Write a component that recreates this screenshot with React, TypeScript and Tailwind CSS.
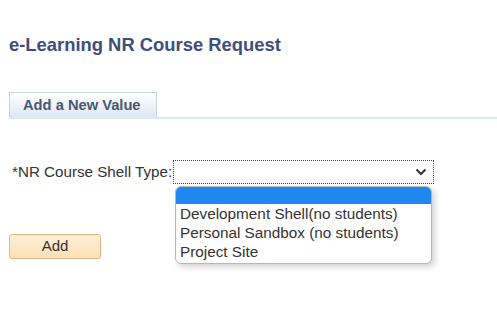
import React from 'react';

const options = ['Development Shell(no students)', 'Personal Sandbox (no students)', 'Project Site'];

export default function App() {
  return (
    <div className="w-[497px] h-[319px] bg-white overflow-hidden" style={{ fontFamily: '"Liberation Sans", Arial, sans-serif' }}>
      <div className="pt-[35px] pl-[9px]">
        <h1 className="text-[18.4px] leading-[20px] font-bold text-[#3c4e7e]">e-Learning NR Course Request</h1>
      </div>

      {/* tab strip */}
      <div className="mt-[37px] ml-[9px] flex items-end border-b-[2px] border-[#dce7f3]">
        <div className="w-[148px] h-[25px] border border-b-0 border-[#c7d4e3] bg-gradient-to-b from-white to-[#dde7f4] flex items-center pl-[13px] text-[14.7px] font-bold text-[#4a5770]">
          Add a New Value
        </div>
      </div>

      {/* field row */}
      <div className="mt-[41px] flex items-center">
        <label className="w-[173px] shrink-0 pl-[12px] text-[15.2px] text-[#333] leading-[16px] whitespace-nowrap">*NR Course Shell Type:</label>
        <div className="relative">
          <div className="w-[261px] h-[24px] border border-dotted border-[#444] bg-white flex items-center justify-end pr-[6px]">
            <svg width="12" height="8" viewBox="0 0 12 8" fill="none">
              <path d="M1.5 1.5L6 6L10.5 1.5" stroke="#333" strokeWidth="2" />
            </svg>
          </div>
          <div className="absolute left-[2px] top-[26px] w-[257px] bg-white border border-[#b8b8b8] rounded-[6px] overflow-hidden shadow-[3px_3px_6px_rgba(0,0,0,0.18)] pb-[2px]">
            <div className="h-[17px] bg-[#1e88f0]" />
            {options.map((o) => (
              <div key={o} className="pl-[4px] text-[15.3px] leading-[19px] text-[#333] whitespace-nowrap">
                {o}
              </div>
            ))}
          </div>
        </div>
      </div>

      <div className="mt-[50px] ml-[9px]">
        <button className="w-[92px] h-[25px] rounded-[3px] border border-[#e6b486] bg-gradient-to-b from-[#fef0da] to-[#fbdfb6] text-[15px] text-[#333]">
          Add
        </button>
      </div>
    </div>
  );
}
